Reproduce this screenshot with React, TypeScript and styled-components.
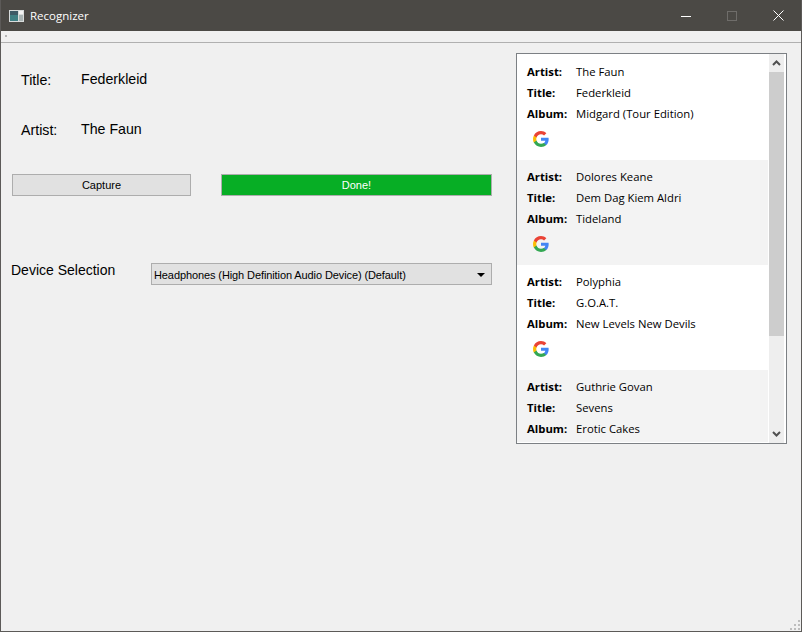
import styled, { createGlobalStyle } from 'styled-components'

const GlobalStyle = createGlobalStyle`
  html, body {
    margin: 0;
    padding: 0;
    background: #f0f0f0;
  }
  * {
    box-sizing: border-box;
  }
`

const Window = styled.div`
  position: relative;
  width: 802px;
  height: 632px;
  display: flex;
  flex-direction: column;
  background: #f0f0f0;
  border: 1px solid #5c5a58;
  border-top: none;
  font-family: 'Liberation Sans', Arial, sans-serif;
  color: #000;
  overflow: hidden;
`

const TitleBar = styled.div`
  height: 31px;
  flex: none;
  display: flex;
  align-items: center;
  background: #4b4945;
  margin: 0 -1px;
  padding: 0 1px 0 9px;
  color: #fff;
  font-family: 'Open Sans', 'Noto Sans', sans-serif;
  font-size: 11.5px;
`

const TitleText = styled.span`
  margin-left: 6px;
  flex: 1;
`

const WindowButton = styled.div`
  width: 46px;
  height: 31px;
  display: flex;
  align-items: center;
  justify-content: center;
`

const MenuBar = styled.div`
  height: 12px;
  flex: none;
  background: #f0f0f0;
  border-bottom: 1px solid #b0b0b0;
  padding: 4px 0 0 4px;
`

const MenuTick = styled.div`
  width: 2px;
  height: 2px;
  background: #b5b5b5;
`

const Central = styled.div`
  flex: 1;
  display: flex;
  align-items: flex-start;
`

const LeftColumn = styled.div`
  width: 515px;
  display: flex;
  flex-direction: column;
`

const InfoRow = styled.div<{ $top: number }>`
  display: flex;
  align-items: center;
  margin-top: ${p => p.$top}px;
  padding-left: 20px;
  height: 22px;
  font-size: 14.2px;
`

const InfoLabel = styled.span`
  width: 60px;
  position: relative;
  top: 1px;
`

const ButtonRow = styled.div`
  display: flex;
  margin-top: 34px;
  padding-left: 11px;
  gap: 30px;
`

const PushButton = styled.div<{ $done?: boolean; $width: number }>`
  width: ${p => p.$width}px;
  height: 22px;
  display: flex;
  align-items: center;
  justify-content: center;
  font-size: 11px;
  background: ${p => (p.$done ? '#07ae25' : '#e1e1e1')};
  color: ${p => (p.$done ? '#fff' : '#000')};
  border: 1px solid #adadad;
`

const DeviceRow = styled.div`
  display: flex;
  align-items: center;
  margin-top: 67px;
  padding-left: 10px;
`

const DeviceLabel = styled.span`
  width: 140px;
  font-size: 14px;
  position: relative;
  top: -4px;
`

const Combo = styled.div`
  width: 341px;
  height: 22px;
  display: flex;
  align-items: center;
  justify-content: space-between;
  padding: 1px 6px 0 2px;
  background: #e1e1e1;
  border: 1px solid #adadad;
  font-size: 11px;
  letter-spacing: -0.1px;
`

const ComboArrow = styled.div`
  width: 0;
  height: 0;
  border-left: 4px solid transparent;
  border-right: 4px solid transparent;
  border-top: 4px solid #000;
`

const HistoryPanel = styled.div`
  width: 271px;
  height: 391px;
  margin-top: 10px;
  display: flex;
  padding: 0 2px 0 0;
  background: #fff;
  border: 1px solid #7c8084;
  overflow: hidden;
`

const HistoryList = styled.div`
  width: 251px;
  padding-top: 1px;
  margin-right: 1px;
  margin-bottom: 1px;
  overflow: hidden;
`

const HistoryItem = styled.div<{ $alt: boolean }>`
  height: 105px;
  padding: 6px 0 0 10px;
  background: ${p => (p.$alt ? '#f3f3f3' : '#fff')};
  font-family: 'Open Sans', 'Noto Sans', sans-serif;
  font-size: 11.3px;
`

const ItemLine = styled.div`
  display: flex;
  align-items: center;
  height: 21px;
`

const ItemLabel = styled.span`
  width: 49px;
  font-weight: 700;
`

const GoogleLink = styled.div`
  margin: 7px 0 0 6px;
  width: 16px;
  height: 16px;
`

const ScrollBar = styled.div`
  width: 15px;
  flex: none;
  display: flex;
  flex-direction: column;
  background: #eeeeee;
`

const ScrollArrow = styled.div`
  height: 18px;
  flex: none;
  display: flex;
  align-items: center;
  justify-content: center;
`

const ScrollThumb = styled.div`
  height: 264px;
  flex: none;
  background: #cdcdcd;
`

const ScrollTrack = styled.div`
  flex: 1;
`

const ResizeGrip = styled.svg`
  position: absolute;
  right: 1px;
  bottom: 1px;
`

const history = [
  { artist: 'The Faun', title: 'Federkleid', album: 'Midgard (Tour Edition)' },
  { artist: 'Dolores Keane', title: 'Dem Dag Kiem Aldri', album: 'Tideland' },
  { artist: 'Polyphia', title: 'G.O.A.T.', album: 'New Levels New Devils' },
  { artist: 'Guthrie Govan', title: 'Sevens', album: 'Erotic Cakes' },
]

function GoogleIcon() {
  return (
    <svg width="16" height="16" viewBox="0 0 24 24">
      <path fill="#4285F4" d="M23.5 12.3c0-.8-.1-1.6-.2-2.3H12v4.5h6.5c-.3 1.5-1.1 2.8-2.4 3.6v3h3.9c2.2-2.1 3.5-5.2 3.5-8.8z" />
      <path fill="#34A853" d="M12 24c3.2 0 6-1.1 8-2.9l-3.9-3c-1.1.7-2.5 1.2-4.1 1.2-3.1 0-5.8-2.1-6.7-5H1.3v3.1C3.3 21.3 7.3 24 12 24z" />
      <path fill="#FBBC05" d="M5.3 14.3c-.2-.7-.4-1.5-.4-2.3s.1-1.6.4-2.3V6.6h-4C.5 8.2 0 10 0 12s.5 3.8 1.3 5.4l4-3.1z" />
      <path fill="#EA4335" d="M12 4.8c1.8 0 3.3.6 4.6 1.8l3.4-3.4C18 1.2 15.2 0 12 0 7.3 0 3.3 2.7 1.3 6.6l4 3.1c.9-2.8 3.6-4.9 6.7-4.9z" />
    </svg>
  )
}

function AppIcon() {
  return (
    <svg width="15" height="12" viewBox="0 0 15 12">
      <rect x="0" y="0" width="15" height="12" fill="#d8dcdc" />
      <rect x="1" y="1" width="8" height="10" fill="#3f7f83" />
      <rect x="1" y="1" width="8" height="4" fill="#3d5a66" />
      <rect x="10" y="1" width="4" height="3" fill="#f4f4f4" />
      <rect x="10" y="5" width="4" height="6" fill="#a9b4b4" />
    </svg>
  )
}

export default function App() {
  return (
    <Window>
      <GlobalStyle />
      <TitleBar>
        <AppIcon />
        <TitleText>Recognizer</TitleText>
        <WindowButton>
          <svg width="10" height="10" viewBox="0 0 10 10">
            <rect x="0" y="5" width="10" height="1" fill="#fff" />
          </svg>
        </WindowButton>
        <WindowButton>
          <svg width="10" height="10" viewBox="0 0 10 10">
            <rect x="0.5" y="0.5" width="9" height="9" fill="none" stroke="#6f6d6a" />
          </svg>
        </WindowButton>
        <WindowButton>
          <svg width="11" height="11" viewBox="0 0 11 11">
            <path d="M0.5 0.5 L10.5 10.5 M10.5 0.5 L0.5 10.5" stroke="#fff" strokeWidth="1" fill="none" />
          </svg>
        </WindowButton>
      </TitleBar>
      <MenuBar>
        <MenuTick />
      </MenuBar>
      <Central>
        <LeftColumn>
          <InfoRow $top={25}>
            <InfoLabel>Title:</InfoLabel>
            <span>Federkleid</span>
          </InfoRow>
          <InfoRow $top={28}>
            <InfoLabel>Artist:</InfoLabel>
            <span>The Faun</span>
          </InfoRow>
          <ButtonRow>
            <PushButton $width={179}>Capture</PushButton>
            <PushButton $width={271} $done>Done!</PushButton>
          </ButtonRow>
          <DeviceRow>
            <DeviceLabel>Device Selection</DeviceLabel>
            <Combo>
              <span>Headphones (High Definition Audio Device) (Default)</span>
              <ComboArrow />
            </Combo>
          </DeviceRow>
        </LeftColumn>
        <HistoryPanel>
          <HistoryList>
            {history.map((song, i) => (
              <HistoryItem key={song.artist} $alt={i % 2 === 1}>
                <ItemLine><ItemLabel>Artist:</ItemLabel><span>{song.artist}</span></ItemLine>
                <ItemLine><ItemLabel>Title:</ItemLabel><span>{song.title}</span></ItemLine>
                <ItemLine><ItemLabel>Album:</ItemLabel><span>{song.album}</span></ItemLine>
                <GoogleLink><GoogleIcon /></GoogleLink>
              </HistoryItem>
            ))}
          </HistoryList>
          <ScrollBar>
            <ScrollArrow>
              <svg width="9" height="6" viewBox="0 0 9 6">
                <path d="M1 5 L4.5 1.5 L8 5" stroke="#505050" strokeWidth="2" fill="none" />
              </svg>
            </ScrollArrow>
            <ScrollThumb />
            <ScrollTrack />
            <ScrollArrow>
              <svg width="9" height="6" viewBox="0 0 9 6">
                <path d="M1 1 L4.5 4.5 L8 1" stroke="#505050" strokeWidth="2" fill="none" />
              </svg>
            </ScrollArrow>
          </ScrollBar>
        </HistoryPanel>
      </Central>
      <ResizeGrip width="10" height="10" viewBox="0 0 10 10">
        <g fill="#bdbdbd">
          <rect x="8" y="0" width="2" height="2" />
          <rect x="4" y="4" width="2" height="2" />
          <rect x="8" y="4" width="2" height="2" />
          <rect x="0" y="8" width="2" height="2" />
          <rect x="4" y="8" width="2" height="2" />
          <rect x="8" y="8" width="2" height="2" />
        </g>
      </ResizeGrip>
    </Window>
  )
}
